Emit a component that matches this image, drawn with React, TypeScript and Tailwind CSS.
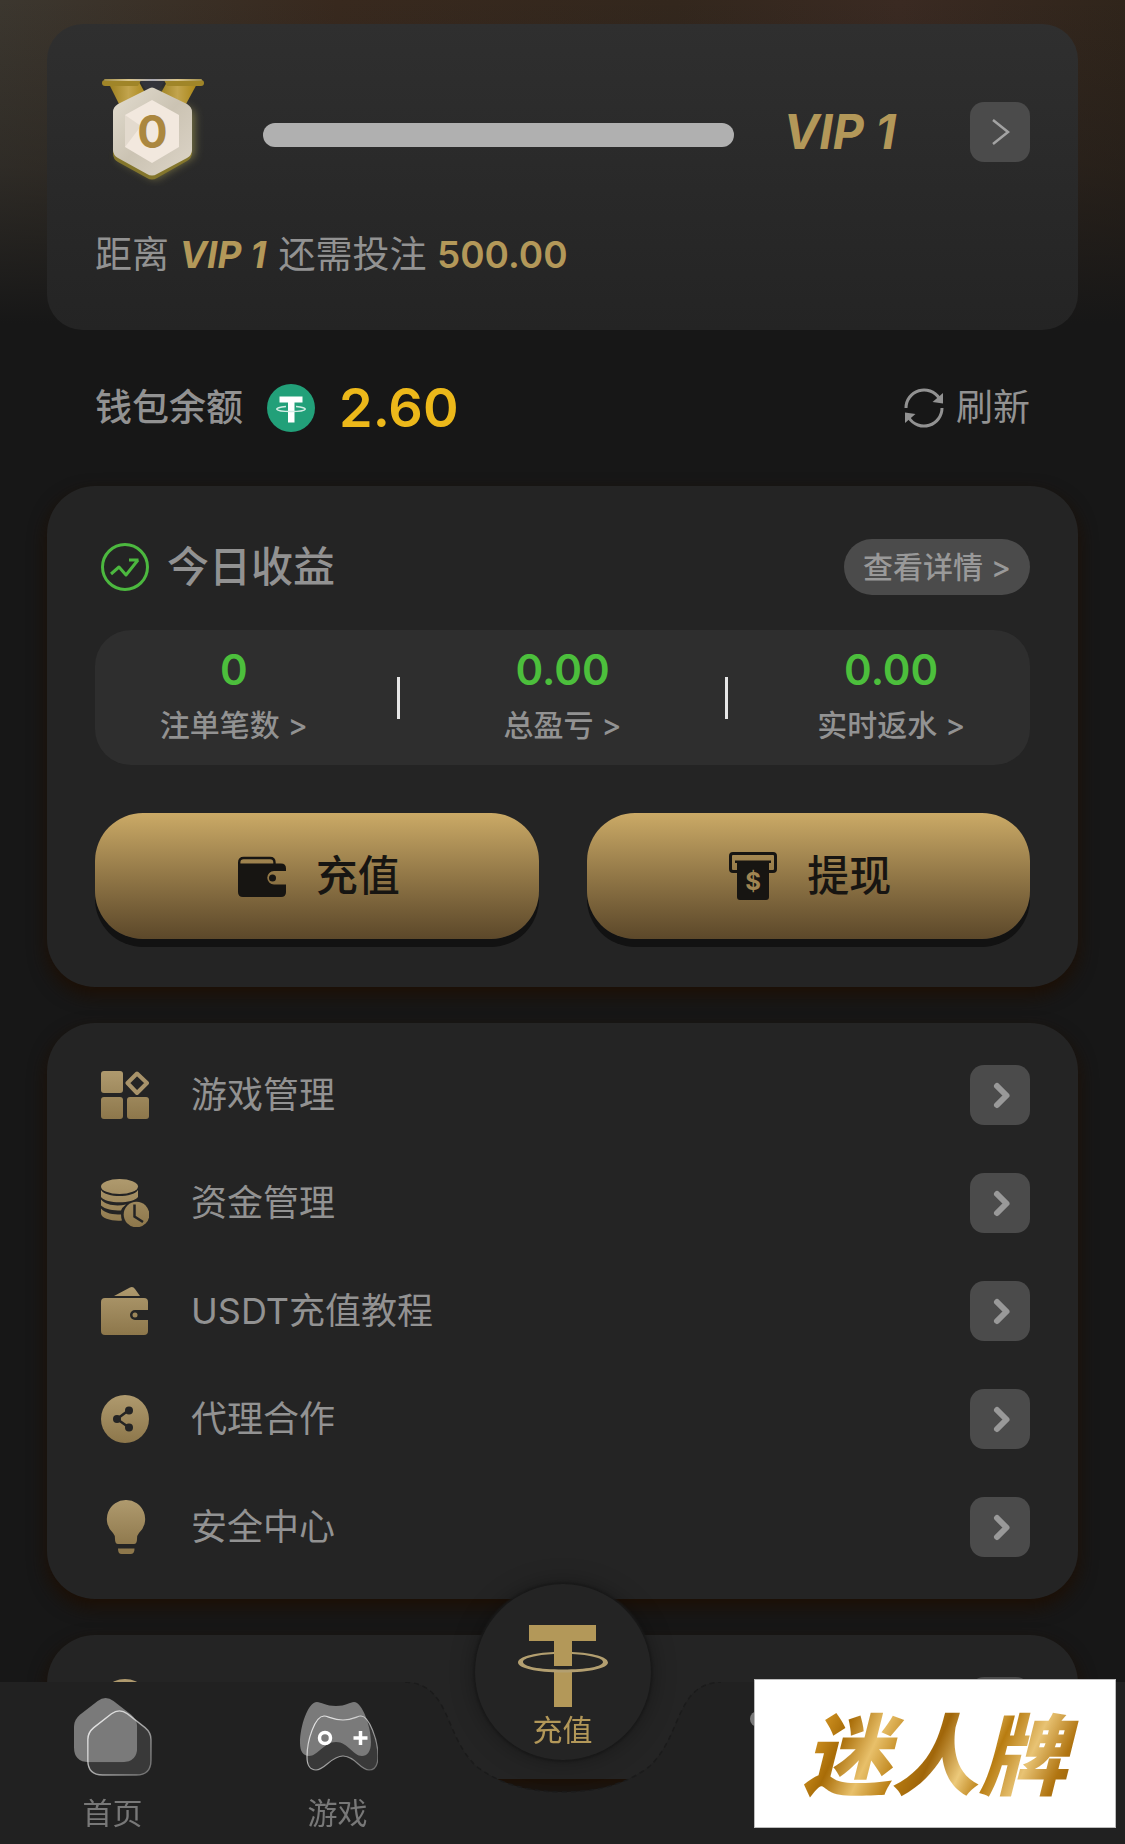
import React from "react";

const GoldDefs = () => (
  <svg width="0" height="0" className="absolute" aria-hidden="true">
    <defs>
      <linearGradient id="gold" x1="0" y1="0" x2="0" y2="48" gradientUnits="userSpaceOnUse">
        <stop offset="0" stopColor="#af9a6e" />
        <stop offset="1" stopColor="#8d774b" />
      </linearGradient>
    </defs>
  </svg>
);

const Medal = () => (
  <svg viewBox="0 0 104 108" className="h-[108px] w-[104px] shrink-0" aria-label="VIP 0">
    <defs>
      <linearGradient id="ribbon" x1="0" x2="1">
        <stop offset="0" stopColor="#9a7d1c" />
        <stop offset="0.5" stopColor="#c2a44d" />
        <stop offset="1" stopColor="#a88413" />
      </linearGradient>
      <linearGradient id="bar" x1="0" x2="1">
        <stop offset="0" stopColor="#a08d4a" />
        <stop offset="0.25" stopColor="#d9c48a" />
        <stop offset="0.5" stopColor="#a9a9b4" />
        <stop offset="0.75" stopColor="#d9c48a" />
        <stop offset="1" stopColor="#a08d4a" />
      </linearGradient>
      <linearGradient id="hex" x1="0" y1="0" x2="1" y2="1">
        <stop offset="0" stopColor="#e3ddd0" />
        <stop offset="0.5" stopColor="#cbc3b3" />
        <stop offset="1" stopColor="#ddd5c8" />
      </linearGradient>
      <filter id="glow" x="-30%" y="-30%" width="160%" height="160%">
        <feGaussianBlur stdDeviation="5" />
      </filter>
    </defs>
    <path d="M53 12 L93 34 V78 L54 101 L16 80 Z" fill="#a39a52" opacity="0.7" filter="url(#glow)" />
    <path d="M7 4 H38 L48 22 L26 38 L18 26 Z" fill="url(#ribbon)" />
    <path d="M97 4 H66 L56 22 L76 38 L85 26 Z" fill="url(#ribbon)" />
    <path d="M39 3 H64 L58 12 H45 Z" fill="#33333a" />
    <path d="M4 2H40L37 8H4Q1 8 1 5T4 2z" fill="#a08528" />
    <path d="M100 2H63L66 8H100Q103 8 103 5T100 2z" fill="#a08528" />
    <rect x="3" y="1" width="98" height="2" rx="1" fill="url(#bar)" />
    <path d="M47 15 Q51 12 55 15 L86 31 Q91 34 91 39 V75 Q91 80 86 83 L56 100 Q51 103 46 100 L17 84 Q12 81 12 76 V39 Q12 34 17 31 Z" fill="#84762c" />
    <path d="M47 11 Q51 8 55 11 L86 26 Q91 29 91 34 V72 Q91 77 86 80 L56 96 Q51 99 46 96 L17 80 Q12 77 12 72 V34 Q12 29 17 26 Z" fill="url(#hex)" />
    <path d="M51 22 L78 37 V69 L51 85 L24 69 V37 Z" fill="#f2e8de" />
    <path d="M24 37 L40 48 L24 69 Z" fill="#e3dace" />
    <text x="51.500" y="70" textAnchor="middle" fontFamily="Inter" fontWeight="700" fontSize="45" fill="#ab873f">0</text>
  </svg>
);

const TetherCoin = () => (
  <svg viewBox="0 0 48 48" className="size-12" aria-label="USDT">
    <circle cx="24" cy="24" r="24" fill="#22a079" />
    <path d="M12.500 12.500h23v6h-8v20h-6.500v-20h-8.500z" fill="#fff" />
    <path d="M19 22.500c-13 1 -13 5 5 5s18 -4 5 -5" fill="none" stroke="#d3ede5" strokeWidth="1.500" />
  </svg>
);

const RefreshIcon = () => (
  <svg viewBox="0 0 40 40" className="size-10" fill="none" stroke="#929292" strokeWidth="3" aria-hidden="true">
    <path d="M2 20a18 18 0 0 1 33-10" />
    <path d="M38 20a18 18 0 0 1-33 10" />
    <path d="M39 5v10.500l-10.500-1.500z" fill="#929292" stroke="none" />
    <path d="M1 35v-10.500l10.500 1.500z" fill="#929292" stroke="none" />
  </svg>
);

const TrendIcon = () => (
  <svg viewBox="0 0 48 48" className="size-12" fill="none" stroke="#4cb83f" strokeWidth="3" aria-hidden="true">
    <circle cx="24" cy="24" r="22.500" />
    <path d="M10 31l8-7 7 8 12-15M28 17h9.500" strokeLinejoin="round" />
  </svg>
);

const DepositIcon = () => (
  <svg viewBox="0 0 48 48" className="size-12" aria-hidden="true">
    <path d="M1.200 16V10.500q0-4.500 4.500-4.500H32q4.500 0 4.500 4.500v1.500" fill="none" stroke="#171512" strokeWidth="2.400" />
    <path d="M0 11.500H43q5 0 5 5V19H36a6.500 6.500 0 0 0 0 13.500H48V40q0 5-5 5H5q-5 0-5-5z" fill="#171512" />
    <circle cx="34.500" cy="26" r="3.500" fill="#171512" />
  </svg>
);

const WithdrawIcon = () => (
  <svg viewBox="0 0 48 48" className="size-12" aria-hidden="true">
    <path d="M8 19.500H4q-2.500 0-2.500-2.500V4q0-2.500 2.500-2.500h40q2.500 0 2.500 2.500v13q0 2.500-2.500 2.500h-4" fill="none" stroke="#171512" strokeWidth="3" />
    <path d="M6 8.500h36v2.500h-2v34q0 3-3 3H11q-3 0-3-3v-34H6z" fill="#171512" />
    <text x="24" y="37.500" textAnchor="middle" fontFamily="Inter" fontWeight="700" fontSize="24" fill="#a08552">$</text>
  </svg>
);

const GridIcon = () => (
  <svg viewBox="0 0 48 48" className="size-12" fill="url(#gold)" aria-hidden="true">
    <rect width="22" height="22" rx="3" />
    <rect y="26" width="22" height="22" rx="3" />
    <rect x="26" y="26" width="22" height="22" rx="3" />
    <path d="M36 2.500L46 12 36 22 26.500 12z" fill="none" stroke="#a8936a" strokeWidth="4" strokeLinejoin="round" />
  </svg>
);

const FundsIcon = () => (
  <svg viewBox="0 0 48 48" className="size-12" fill="url(#gold)" aria-hidden="true">
    <ellipse cx="18.500" cy="7.500" rx="18.500" ry="7.500" />
    <path d="M0 11c5 8 32 8 37 0v7c-5 7-32 7-37 0z" />
    <path d="M0 20.500c5 6 16 7 25 5q-4 3-5 6c-8 0-16-1-20-5z" />
    <path d="M0 29.500c4 5 12 6 20 6q0 3 1 6c-9 1-21-2-21-7z" />
    <circle cx="35.500" cy="35.500" r="12.800" />
    <path d="M33.500 25.500v12l8.500 5.500" fill="none" stroke="#242424" strokeWidth="2.500" />
  </svg>
);

const WalletIcon = () => (
  <svg viewBox="0 0 48 48" className="size-12" fill="url(#gold)" aria-hidden="true">
    <path d="M13 9L29 .5q3-1.500 5 1.500l5 7z" />
    <path d="M4 11h39q4 0 4 4v8H34a5 5 0 0 0 0 10h13v11q0 4-4 4H4q-4 0-4-4V15q0-4 4-4z" />
    <circle cx="34" cy="28" r="2.500" />
  </svg>
);

const ShareIcon = () => (
  <svg viewBox="0 0 48 48" className="size-12" aria-hidden="true">
    <circle cx="24" cy="24" r="24" fill="url(#gold)" />
    <path d="M28 15L16 24l12 8.500" fill="none" stroke="#242424" strokeWidth="2.500" />
    <circle cx="28" cy="15.500" r="4" fill="#242424" />
    <circle cx="16" cy="24" r="4" fill="#242424" />
    <circle cx="28" cy="32.500" r="4" fill="#242424" />
  </svg>
);

const BulbIcon = () => (
  <svg viewBox="0 0 48 54" className="h-[54px] w-12" fill="url(#gold)" aria-hidden="true">
    <path d="M25 0a19 19 0 0 1 13 33q-2 2-2 6 0 5-3 5H17q-3 0-3-5 0-4-2-6A19 19 0 0 1 25 0z" />
    <path d="M17 48.500h16.500q0 5.500-4 5.500h-9q-3.500 0-3.500-5.500z" />
  </svg>
);

const ServiceIcon = () => (
  <svg viewBox="0 0 56 56" className="size-14 shrink-0" aria-hidden="true">
    <circle cx="28" cy="28" r="28" fill="#af9a6e" />
    <circle cx="28" cy="32" r="12" fill="#242424" />
  </svg>
);

const housePath = "M24 3q8-6 16 0l18 14q6 5 6 12v21q0 15-15 15H15Q0 65 0 50V29q0-7 6-12z";

const HomeIcon = () => (
  <svg viewBox="0 0 79 79" className="h-[78px] w-[78px]" aria-hidden="true">
    <defs>
      <linearGradient id="edge" x1="0" y1="0" x2="1" y2="1">
        <stop offset="0" stopColor="#fff" stopOpacity="0.9" />
        <stop offset="1" stopColor="#fff" stopOpacity="0.3" />
      </linearGradient>
      <clipPath id="houseClip">
        <path d={housePath} />
      </clipPath>
    </defs>
    <path d={housePath} fill="#7a7a7a" />
    <path d={housePath} transform="translate(14 13)" fill="#393939" />
    <g clipPath="url(#houseClip)">
      <path d={housePath} transform="translate(14 13)" fill="#7a7a7a" />
    </g>
    <path d={housePath} transform="translate(14 13)" fill="none" stroke="url(#edge)" strokeWidth="1.400" />
  </svg>
);

const padPath =
  "M17 0C21 0 26 4 36 4S50 0 54 0C62 0 71 24 71 40C71 50 67 54 62 54C53 54 48 40 36 40S18 54 9 54C3 54 0 49 0 41C0 24 8 0 17 0Z";

const GamepadIcon = () => (
  <svg viewBox="0 0 80 78" className="h-[78px] w-20" aria-hidden="true">
    <defs>
      <clipPath id="padClip">
        <path d={padPath} transform="translate(2 4)" />
      </clipPath>
    </defs>
    <path d={padPath} transform="translate(2 4)" fill="#7a7a7a" />
    <path d={padPath} transform="translate(9 18)" fill="#393939" />
    <g clipPath="url(#padClip)">
      <path d={padPath} transform="translate(9 18)" fill="#7a7a7a" />
    </g>
    <path d={padPath} transform="translate(9 18)" fill="none" stroke="url(#edge)" strokeWidth="1.200" />
    <circle cx="27" cy="40" r="5.500" fill="none" stroke="#fff" strokeWidth="3.500" />
    <path d="M62.500 33v14M55.500 40h14" stroke="#fff" strokeWidth="3.500" />
  </svg>
);

const TetherMark = () => (
  <svg viewBox="0 0 90 84" className="h-[84px] w-[90px]" aria-hidden="true">
    <path d="M11 1h67v16H54v25H36V17H11z" fill="#b39859" />
    <path d="M36 46h18v37H36z" fill="#b39859" />
    <path
      fillRule="evenodd"
      d="M36 28C15 29 0 33 0 38.500 0 44 18 48.500 45 48.500S90 44 90 38.500C90 33 75 29 54 28v2c18 1 31 4 31 8 0 4.500-16 7.500-40 7.500S5 42.500 5 38c0-4 13-7 31-8z"
      fill="#b39f70"
    />
  </svg>
);

const stats = [
  { value: "0", label: "注单笔数 >" },
  { value: "0.00", label: "总盈亏 >" },
  { value: "0.00", label: "实时返水 >" },
];

const menu = [
  { label: "游戏管理", Icon: GridIcon },
  { label: "资金管理", Icon: FundsIcon },
  { label: "USDT充值教程", Icon: WalletIcon },
  { label: "代理合作", Icon: ShareIcon },
  { label: "安全中心", Icon: BulbIcon },
];

const cardClass = "rounded-[48px] bg-[#242424] shadow-[0_8px_18px_#1d0f04]";

function MenuRow({ label, Icon }: { label: string; Icon: React.ComponentType }) {
  return (
    <a href="#" aria-label={label || "客服"} className="flex h-[60px] items-center">
      <span className="ml-1.5 flex w-12 justify-center">
        <Icon />
      </span>
      <span className="ml-[42px] flex-1 text-[36px] leading-[54px] text-[#929292]">{label}</span>
      <span className="flex size-[60px] items-center justify-center rounded-[14px] bg-[#4b4b4b]">
        <svg viewBox="0 0 60 60" className="size-[60px]" fill="none" stroke="#999" strokeWidth="6" strokeLinecap="round" strokeLinejoin="round">
          <path d="M27 21l9.500 9.500L27 40" />
        </svg>
      </span>
    </a>
  );
}

export default function App() {
  return (
    <div className="min-h-screen bg-[#171717] font-['Inter','Noto_Sans_CJK_SC',sans-serif] text-[#929292]">
      <GoldDefs />
      <main className="flex flex-col pb-[66px]">
        <div className="bg-[linear-gradient(to_bottom,transparent,rgba(23,23,23,0.35)_50%,#171717_98%),linear-gradient(to_right,#3c372f,#38291e_30%,#33271d_60%,#3a2a22_80%,#30251b)] px-[47px] pt-6">
          <section className="rounded-[36px] bg-linear-to-b from-[#2f2f2f] to-[#242424] px-12 pt-[54px] pb-12">
            <div className="flex h-[108px] items-center">
              <span className="ml-1.5">
                <Medal />
              </span>
              <div role="progressbar" aria-label="VIP 进度" aria-valuenow={0} className="mt-1.5 ml-[58px] h-6 flex-1 rounded-full bg-[#b0b0b0]" />
              <span className="mr-[74px] ml-[50px] text-[48px] leading-[60px] font-bold text-[#b39859] italic">VIP 1</span>
              <button aria-label="查看 VIP" className="flex size-[60px] items-center justify-center rounded-[14px] bg-[#4b4b4b]">
                <svg viewBox="0 0 60 60" className="size-[60px]" fill="none" stroke="#a3a3a3" strokeWidth="2.500">
                  <path d="M23 18l15 12-15 12" />
                </svg>
              </button>
            </div>
            <p className="mt-[42px] text-[37px] leading-[54px]">
              距离 <b className="mr-0.5 font-bold text-[#b39859] italic">VIP 1</b> 还需投注{" "}
              <b className="font-semibold text-[#b39859]">500.00</b>
            </p>
          </section>
        </div>

        <section className="flex h-[156px] items-center px-[95px]">
          <h2 className="text-[37px] leading-[54px] font-medium">钱包余额</h2>
          <span className="ml-6">
            <TetherCoin />
          </span>
          <strong className="ml-6 text-[54px] leading-[60px] font-semibold text-[#ecb81a]">2.60</strong>
          <button className="ml-auto flex items-center gap-3 text-[37px] leading-[54px]">
            <RefreshIcon />
            刷新
          </button>
        </section>

        <div className="flex flex-col gap-9 px-[47px]">
          <section className={`${cardClass} p-12`}>
            <header className="flex h-16 items-center pt-0.5">
              <span className="ml-1.5">
                <TrendIcon />
              </span>
              <h2 className="ml-[18px] text-[42px] leading-[60px] font-medium">今日收益</h2>
              <button className="ml-auto h-14 rounded-full bg-[#4b4b4b] px-[19px] text-[30px] leading-[56px] font-medium text-[#999]">
                查看详情 &gt;
              </button>
            </header>
            <div className="mt-8 flex h-[135px] items-center rounded-[36px] bg-[#2e2e2e]">
              {stats.map((s, i) => (
                <React.Fragment key={s.label}>
                  {i > 0 && <span className="mx-6 h-[42px] w-[3px] bg-[#e6e6e6]" />}
                  <a href="#" className="flex flex-1 flex-col items-center pb-1.5">
                    <span className="text-[42px] leading-[60px] font-semibold text-[#4cbf3c]">{s.value}</span>
                    <span className="text-[30px] leading-[50px] font-medium">{s.label}</span>
                  </a>
                </React.Fragment>
              ))}
            </div>
            <div className="mt-12 grid grid-cols-2 gap-12">
              {[
                { label: "充值", Icon: DepositIcon },
                { label: "提现", Icon: WithdrawIcon },
              ].map(({ label, Icon }) => (
                <button
                  key={label}
                  className="flex h-[126px] items-center justify-center gap-[30px] rounded-[48px] bg-linear-to-b from-[#cbaa66] to-[#5c482a] pl-1 text-[42px] leading-[60px] font-medium text-[#171512] shadow-[0_8px_0_#121212]"
                >
                  <Icon />
                  {label}
                </button>
              ))}
            </div>
          </section>

          <nav aria-label="菜单" className={`${cardClass} flex flex-col gap-12 px-12 py-[42px]`}>
            {menu.map((m) => (
              <MenuRow key={m.label} {...m} />
            ))}
          </nav>

          <section className={`${cardClass} px-12 py-[42px]`}>
            <MenuRow label="" Icon={ServiceIcon} />
          </section>
        </div>
      </main>

      <nav aria-label="主导航" className="fixed inset-x-0 bottom-0 flex h-[162px]">
        <div className="absolute inset-0 flex">
          <span className="flex-1 bg-[#212121]" />
          <svg viewBox="0 0 324 162" className="h-[162px] w-[324px]" aria-hidden="true">
            <path d="M0 0H4C50 2 42 52 75 84Q108 110 162 110T249 84C282 52 274 2 320 0H324V162H0Z" fill="#212121" />
            <path d="M4 0C50 2 42 52 75 84Q108 110 162 110T249 84C282 52 274 2 320 0" fill="none" stroke="#1b1b1b" strokeWidth="1.500" strokeDasharray="5 4" />
          </svg>
          <span className="flex-1 bg-[#212121]" />
        </div>
        <div className="relative grid flex-1 grid-cols-5 text-[30px] leading-[44px] text-[#787878]">
          <a href="#" className="flex flex-col items-center gap-[15px] pt-4">
            <HomeIcon />
            首页
          </a>
          <a href="#" className="flex flex-col items-center gap-[15px] pt-4">
            <GamepadIcon />
            游戏
          </a>
          <div className="flex justify-center">
            <button className="absolute -top-[98px] flex size-[176px] flex-col items-center rounded-full bg-[#242424] pt-10 text-[#b39859] shadow-[0_0_2px_2px_#191919,0_0_24px_rgba(0,0,0,0.35)]">
              <TetherMark />
              充值
            </button>
          </div>
          <a href="#" aria-label="优惠" className="flex justify-center pt-[29px]">
            <span className="h-4 w-[76px] rounded-full bg-[#7a7a7a]" />
          </a>
          <a href="#" aria-label="我的" />
        </div>
        <div className="absolute right-[9px] bottom-4 flex h-[149px] w-[362px] items-center justify-center border border-[#bdbdbd] bg-white pb-2">
          <span className="bg-[linear-gradient(115deg,#a66c08,#d99c2a_12%,#a86c07_22%,#e8c06a_32%,#b87c10_42%,#a0660a_50%,#ecc97a_60%,#b87c10_68%,#e8c374_78%,#b07410_88%,#85550a)] bg-clip-text px-4 font-['Noto_Sans_CJK_SC',sans-serif] text-[88px] leading-[120px] font-black text-transparent italic">
            迷人牌
          </span>
        </div>
      </nav>
    </div>
  );
}
